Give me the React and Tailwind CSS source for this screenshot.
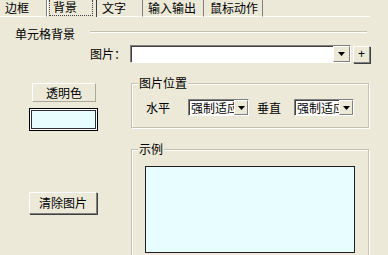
import React from 'react';

const font = { fontFamily: '"Noto Sans CJK SC", "Noto Sans", sans-serif' };

const raised = 'bg-[#ECE9D8] border border-t-white border-l-white border-r-[#808080] border-b-[#808080] shadow-[1px_1px_0_#404040]';
const sunken = 'bg-white border border-t-[#808080] border-l-[#808080] border-r-white border-b-white shadow-[inset_1px_1px_0_#404040]';
const etched = 'border border-[#C5C2B2] shadow-[inset_1px_1px_0_#fff,1px_1px_0_#fff]';

const Arrow = () => (
  <svg width="7" height="4" viewBox="0 0 7 4">
    <path d="M0 0h7L3.5 4z" fill="#000" />
  </svg>
);

const DropButton = ({ w = 'w-[16px]' }) => (
  <div className={`${w} h-full flex items-center justify-center ${raised} shadow-none`}>
    <Arrow />
  </div>
);

// the value is wider than the box, so it gets cut like the original
const Select = ({ width }) => (
  <div className={`${width} h-[17px] flex ${sunken}`}>
    <div className="flex-1 overflow-hidden whitespace-nowrap pl-[2px] leading-[15px] text-[12px]">强制适应</div>
    <DropButton w="w-[14px]" />
  </div>
);

const Tab = ({ children, className }) => (
  <div className={`h-[17px] pt-[1px] leading-[14px] border-r border-r-[#808080] border-b border-b-white ${className}`}>
    {children}
  </div>
);

export default function App() {
  return (
    <div className="w-[388px] h-[255px] bg-[#ECE9D8] overflow-hidden text-black text-[12px]" style={font}>
      {/* tabs */}
      <div className="flex h-[18px]">
        <Tab className="w-[47px] pl-[5px]">边框</Tab>
        <div className="w-[50px] h-[17px] border-l border-l-white border-r border-r-[#404040] pl-[1px]">
          <div className="w-[44px] h-[16px] border border-dotted border-[#404040] border-t-0 pl-[3px] leading-[14px]">背景</div>
        </div>
        <Tab className="w-[46px] pl-[5px]">文字</Tab>
        <Tab className="w-[61px] pl-[5px]">输入输出</Tab>
        <Tab className="w-[59px] pl-[6px]">鼠标动作</Tab>
        <div className="flex-1 h-[17px] border-b border-b-white mr-[18px]" />
      </div>

      {/* 单元格背景 */}
      <div className="flex mt-[9px] h-[14px] pl-[15px] leading-[14px]">
        <span>单元格背景</span>
        <div className="flex-1 ml-[15px] mr-[21px] mt-[4px] h-[2px] border-t border-t-[#C5C2B2] border-b border-b-white" />
      </div>

      {/* 图片 */}
      <div className="flex mt-[4px] h-[18px] pl-[90px] items-center">
        <span className="w-[36px] leading-[14px]">图片：</span>
        <div className={`ml-[4px] w-[221px] h-[18px] flex justify-end ${sunken}`}>
          <DropButton w="w-[17px]" />
        </div>
        <div className={`ml-[2px] w-[17px] h-[17px] flex items-center justify-center leading-none ${raised}`}>
          <span style={{ fontFamily: '"Liberation Sans", sans-serif' }} className="text-[12px] -mt-[1px]">+</span>
        </div>
      </div>

      <div className="flex pl-[29px]">
        {/* left column */}
        <div className="w-[69px] flex flex-col">
          <div className={`mt-[20px] ml-[3px] w-[64px] h-[19px] flex items-center justify-center leading-[14px] ${raised} shadow-none border-r-[#ACA899] border-b-[#ACA899]`}>
            透明色
          </div>
          <div className="mt-[6px] w-[69px] h-[23px] border border-black bg-white p-[1px]">
            <div className="w-full h-full border border-[#303030] bg-[#E8FDFF]" />
          </div>
          <div className={`mt-[61px] w-[68px] h-[22px] flex items-center justify-center leading-[14px] ${raised}`}>
            清除图片
          </div>
        </div>

        {/* right column */}
        <div className="ml-[33px] w-[238px] flex flex-col">
          <div className={`mt-[20px] pb-[11px] ${etched}`}>
            <div className="-mt-[8px] ml-[6px] px-[1px] w-fit bg-[#ECE9D8] leading-[14px]">图片位置</div>
            <div className="flex items-center mt-[9px] h-[17px] pl-[14px]">
              <span className="w-[24px] leading-[14px]">水平</span>
              <div className="ml-[18px]"><Select width="w-[61px]" /></div>
              <span className="ml-[8px] w-[24px] leading-[14px]">垂直</span>
              <div className="ml-[13px]"><Select width="w-[60px]" /></div>
            </div>
          </div>

          <div className={`mt-[21px] pb-[10px] ${etched}`}>
            <div className="-mt-[8px] ml-[6px] px-[1px] w-fit bg-[#ECE9D8] leading-[14px]">示例</div>
            <div className="mt-[10px] ml-[13px] w-[210px] h-[87px] border border-[#202020] bg-[#E8FDFF]" />
          </div>
        </div>
      </div>
    </div>
  );
}
